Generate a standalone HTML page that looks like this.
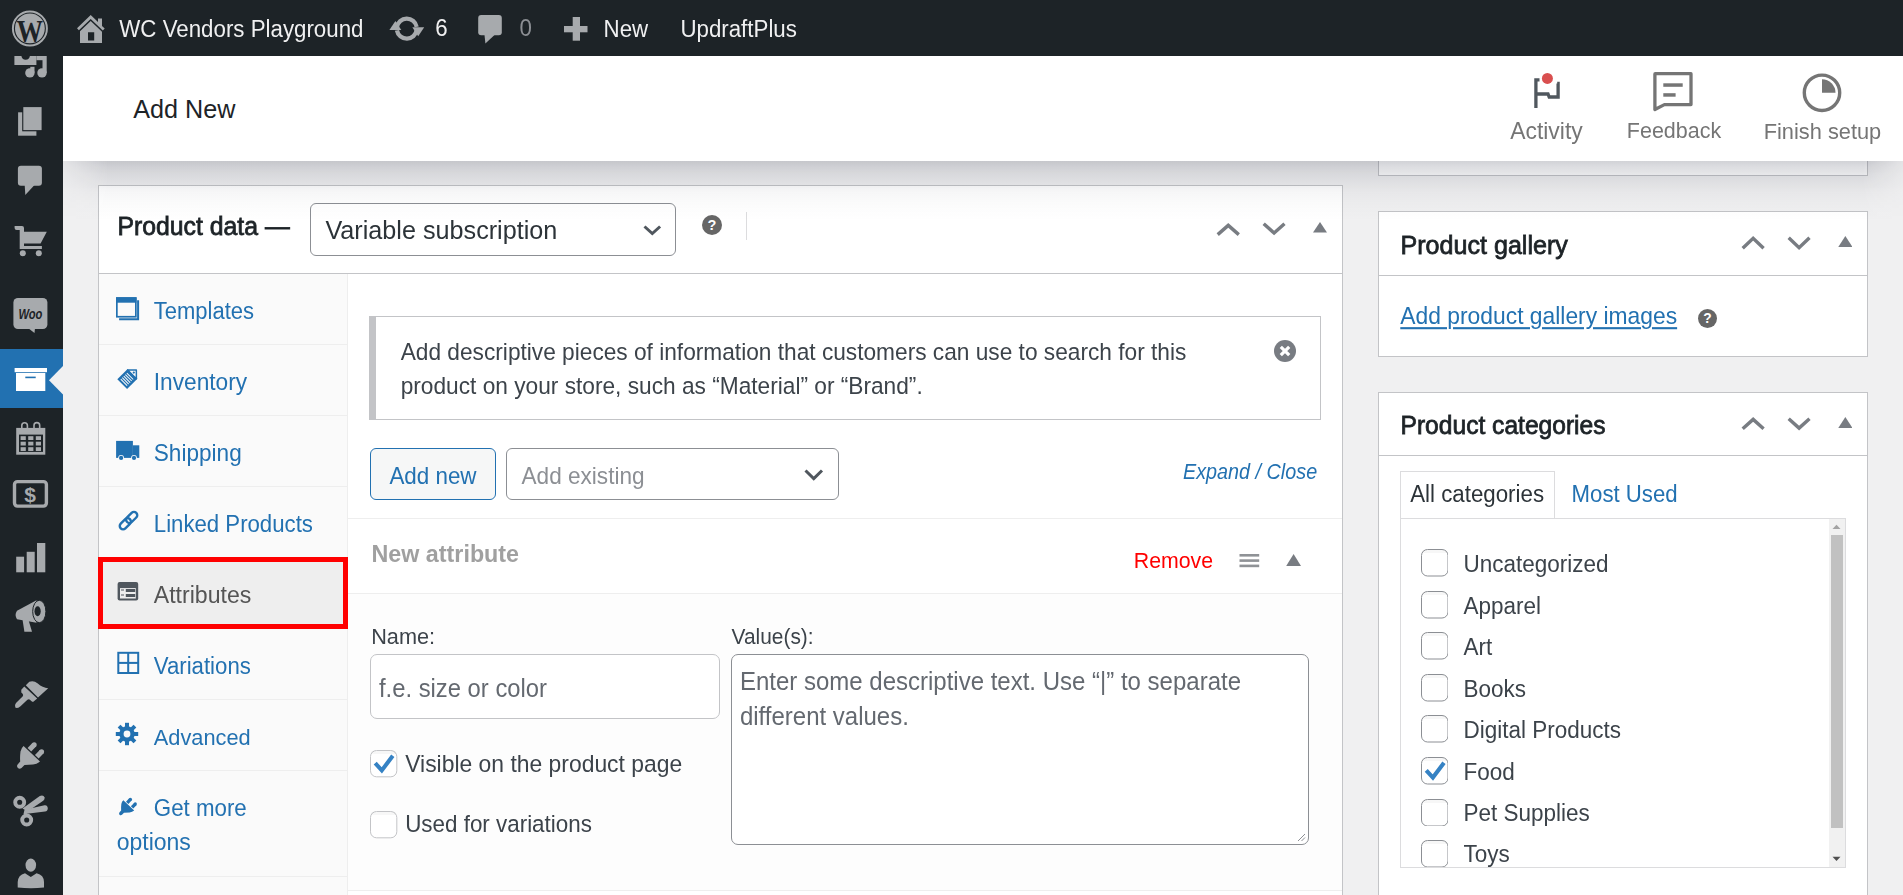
<!DOCTYPE html>
<html><head><meta charset="utf-8"><title>Add New</title>
<style>
html,body{margin:0;padding:0;}
body{width:1903px;height:895px;overflow:hidden;position:relative;background:#f0f0f1;font-family:"Liberation Sans",sans-serif;}
.t{position:absolute;white-space:nowrap;}
.b{position:absolute;box-sizing:border-box;}
</style></head><body>
<div class="b" style="left:1378px;top:100px;width:490px;height:76px;background:#fff;border:1px solid #c3c4c7;"></div>
<div class="b" style="left:1378px;top:211px;width:490px;height:146px;background:#fff;border:1px solid #c3c4c7;"></div>
<div class="b" style="left:1379px;top:275px;width:488px;height:1px;background:#c3c4c7;"></div>
<div class="b" style="left:1378px;top:392px;width:490px;height:508px;background:#fff;border:1px solid #c3c4c7;"></div>
<div class="b" style="left:1379px;top:455px;width:488px;height:1px;background:#c3c4c7;"></div>
<div class="b" style="left:98px;top:185px;width:1245px;height:715px;background:#fff;border:1px solid #c3c4c7;"></div>
<div class="b" style="left:99px;top:273px;width:1243px;height:1px;background:#c3c4c7;"></div>
<div class="b" style="left:99px;top:274px;width:249px;height:626px;background:#fafafa;border-right:1px solid #eee;"></div>
<div class="b" style="left:99px;top:344px;width:248px;height:1px;background:#eee;"></div>
<div class="b" style="left:99px;top:415px;width:248px;height:1px;background:#eee;"></div>
<div class="b" style="left:99px;top:486px;width:248px;height:1px;background:#eee;"></div>
<div class="b" style="left:99px;top:557px;width:248px;height:1px;background:#eee;"></div>
<div class="b" style="left:99px;top:628px;width:248px;height:1px;background:#eee;"></div>
<div class="b" style="left:99px;top:699px;width:248px;height:1px;background:#eee;"></div>
<div class="b" style="left:99px;top:770px;width:248px;height:1px;background:#eee;"></div>
<div class="b" style="left:99px;top:876px;width:248px;height:1px;background:#eee;"></div>
<div class="b" style="left:99px;top:558px;width:248px;height:70px;background:#eee;"></div>
<div class="b" style="left:98px;top:557px;width:250px;height:72px;border:5px solid #f00;"></div>
<div class="b" style="left:348px;top:518px;width:994px;height:1px;background:#eee;"></div>
<div class="b" style="left:348px;top:593px;width:994px;height:1px;background:#eee;"></div>
<div class="b" style="left:348px;top:594px;width:994px;height:296px;background:#fdfdfd;"></div>
<div class="b" style="left:348px;top:890px;width:994px;height:1px;background:#eee;"></div>
<div class="b" style="left:63px;top:56px;width:1840px;height:105px;background:#fff;"></div>
<div class="b" style="left:0px;top:0px;width:1903px;height:56px;background:#1d2327;"></div>
<div class="b" style="left:0px;top:56px;width:63px;height:839px;background:#1d2327;"></div>
<div class="b" style="left:0px;top:349px;width:63px;height:59px;background:#2271b1;"></div>
<svg class="b" style="left:10px;top:9px;" width="40" height="40" viewBox="0 0 40 40"><circle cx="19.9" cy="19.4" r="17" fill="none" stroke="#a7aaad" stroke-width="2"/>
<circle cx="19.9" cy="19.4" r="14.9" fill="#a7aaad"/>
<text x="6.6" y="33" textLength="26.5" lengthAdjust="spacingAndGlyphs" font-family="Liberation Serif" font-weight="bold" font-size="31" fill="#1d2327">W</text></svg>
<svg class="b" style="left:77px;top:15px;" width="28" height="29" viewBox="0 0 28 29"><path d="M0,13.3 L13.7,0 L21,7 V3.6 H25 V11 L27.7,13.6 L25.8,15.5 L13.7,3.9 L1.9,15.3 Z" fill="#a7aaad"/>
<path d="M3,16.3 L13.7,6 L25,16.8 V28 H3 Z M11,17.2 V25.5 H17.2 V17.2 Z" fill="#a7aaad" fill-rule="evenodd"/></svg>
<div class="t" style="left:119.3px;top:18.6px;font-size:22.30px;line-height:22.30px;color:#f0f0f1;transform:scaleY(1.05);transform-origin:0 18.88px;">WC Vendors Playground</div>
<svg class="b" style="left:389px;top:15px;" width="36" height="28" viewBox="0 0 36 28"><path d="M7.90,12.21 A10,10 0 0 1 27.65,11.86" fill="none" stroke="#a7aaad" stroke-width="4.3"/>
<path d="M27.70,14.99 A10,10 0 0 1 7.95,15.34" fill="none" stroke="#a7aaad" stroke-width="4.3"/>
<path d="M23.3,12.2 L35.2,12.2 L29.2,21.2 Z" fill="#a7aaad"/>
<path d="M12.3,15 L0.4,15 L6.4,6 Z" fill="#a7aaad"/></svg>
<div class="t" style="left:435.3px;top:18.1px;font-size:22.30px;line-height:22.30px;color:#f0f0f1;transform:scaleY(1.05);transform-origin:0 18.88px;">6</div>
<svg class="b" style="left:478px;top:15px;" width="25" height="29" viewBox="0 0 25 29"><rect x="0.2" y="0" width="23.6" height="20.3" rx="3" fill="#a7aaad"/>
<path d="M6.5,20 H16.5 L7.4,28.5 Z" fill="#a7aaad"/></svg>
<div class="t" style="left:519.4px;top:18.1px;font-size:22.30px;line-height:22.30px;color:#8c8f94;transform:scaleY(1.05);transform-origin:0 18.88px;">0</div>
<svg class="b" style="left:564px;top:17px;" width="24" height="24" viewBox="0 0 24 24"><rect x="8.7" y="0" width="7.3" height="23.7" fill="#a7aaad"/><rect x="0" y="9" width="23.5" height="6.3" fill="#a7aaad"/></svg>
<div class="t" style="left:603.6px;top:18.6px;font-size:22.30px;line-height:22.30px;color:#f0f0f1;transform:scaleY(1.05);transform-origin:0 18.88px;">New</div>
<div class="t" style="left:680.4px;top:18.6px;font-size:22.30px;line-height:22.30px;color:#f0f0f1;transform:scaleY(1.05);transform-origin:0 18.88px;">UpdraftPlus</div>
<svg class="b" style="left:0px;top:56px;" width="63" height="25" viewBox="0 0 63 25"><path d="M14.4,0 H21.4 A4.3,4.3 0 0 0 29.9,0 H36.4 V8.9 H14.4 Z" fill="#a7aaad"/>
<rect x="42.5" y="0" width="4.2" height="17" fill="#a7aaad"/>
<rect x="36.4" y="0" width="8" height="4.2" fill="#a7aaad"/>
<rect x="30.3" y="10.8" width="4.2" height="6" fill="#a7aaad"/>
<circle cx="29.9" cy="16.9" r="4.7" fill="#a7aaad"/><circle cx="42" cy="16.9" r="4.7" fill="#a7aaad"/></svg>
<svg class="b" style="left:0px;top:100px;" width="63" height="40" viewBox="0 0 63 40"><rect x="18.1" y="12.3" width="18.3" height="23.4" fill="#a7aaad"/>
<rect x="22.2" y="6" width="20.4" height="25.3" fill="#1d2327"/>
<rect x="23.3" y="7.1" width="18.3" height="23" fill="#a7aaad"/></svg>
<svg class="b" style="left:0px;top:160px;" width="63" height="40" viewBox="0 0 63 40"><rect x="17.9" y="5.8" width="24" height="19.9" rx="3" fill="#a7aaad"/>
<path d="M24.7,25 H34.5 L25.3,34.9 Z" fill="#a7aaad"/></svg>
<svg class="b" style="left:0px;top:220px;" width="63" height="40" viewBox="0 0 63 40"><path d="M14.6,6 H22 Q24,6 24,8 V11.8 H46.8 L40.6,23.5 H24 V26 H41.9 V29 H19.7 V10 H16.6 Q14.6,10 14.6,8 Z" fill="#a7aaad"/>
<circle cx="22.8" cy="33.3" r="3" fill="#a7aaad"/><circle cx="38.8" cy="33.3" r="3" fill="#a7aaad"/></svg>
<svg class="b" style="left:0px;top:290px;" width="63" height="50" viewBox="0 0 63 50"><rect x="13.4" y="8" width="34" height="31" rx="4.5" fill="#a7aaad"/>
<path d="M28,38 H35 L34.5,43 Z" fill="#a7aaad"/>
<text x="30.4" y="29" text-anchor="middle" font-family="Liberation Sans" font-style="italic" font-weight="bold" font-size="14.5" textLength="24" lengthAdjust="spacingAndGlyphs" fill="#1d2327">Woo</text></svg>
<svg class="b" style="left:0px;top:360px;" width="63" height="40" viewBox="0 0 63 40"><rect x="14.6" y="8" width="32.4" height="4.2" fill="#fff"/>
<rect x="16" y="13" width="29.3" height="18" fill="#fff"/>
<rect x="25.3" y="16.6" width="10.4" height="1.6" fill="#2271b1"/>
<path d="M63,6 L49,20.3 L63,34.6 Z" fill="#f0f0f1"/></svg>
<svg class="b" style="left:0px;top:420px;" width="63" height="40" viewBox="0 0 63 40"><rect x="16.2" y="7.9" width="29.1" height="26.8" fill="#a7aaad"/><rect x="19" y="14.6" width="24" height="17.3" fill="#1d2327"/><path d="M21.8,9 V5.5 A2.8,2.8 0 0 1 27.4,5.5 V9" fill="none" stroke="#a7aaad" stroke-width="1.6"/><path d="M34,9 V5.5 A2.8,2.8 0 0 1 39.7,5.5 V9" fill="none" stroke="#a7aaad" stroke-width="1.6"/><rect x="20.6" y="16.2" width="5.2" height="3.8" fill="#a7aaad"/><rect x="20.6" y="21.7" width="5.2" height="3.8" fill="#a7aaad"/><rect x="20.6" y="27.2" width="5.2" height="3.8" fill="#a7aaad"/><rect x="28.2" y="16.2" width="5.2" height="3.8" fill="#a7aaad"/><rect x="28.2" y="21.7" width="5.2" height="3.8" fill="#a7aaad"/><rect x="28.2" y="27.2" width="5.2" height="3.8" fill="#a7aaad"/><rect x="35.8" y="16.2" width="5.2" height="3.8" fill="#a7aaad"/><rect x="35.8" y="21.7" width="5.2" height="3.8" fill="#a7aaad"/><rect x="35.8" y="27.2" width="5.2" height="3.8" fill="#a7aaad"/></svg>
<svg class="b" style="left:0px;top:475px;" width="63" height="40" viewBox="0 0 63 40"><rect x="14.5" y="6.6" width="31.9" height="24.5" rx="3" fill="none" stroke="#a7aaad" stroke-width="3.4"/>
<text x="30.2" y="27" text-anchor="middle" font-family="Liberation Sans" font-weight="bold" font-size="21" fill="#a7aaad">$</text></svg>
<svg class="b" style="left:0px;top:540px;" width="63" height="40" viewBox="0 0 63 40"><rect x="16.2" y="16.7" width="7.9" height="15.6" fill="#a7aaad"/>
<rect x="26.7" y="11.8" width="8" height="20.5" fill="#a7aaad"/>
<rect x="37" y="3" width="8.3" height="29.3" fill="#a7aaad"/></svg>
<svg class="b" style="left:0px;top:595px;" width="63" height="40" viewBox="0 0 63 40"><path d="M17,15.8 L36.5,5.2 V27.7 L17,24.2 Q14.2,20 17,15.8 Z" fill="#a7aaad"/>
<path d="M22.6,25 H28.5 L32,36.8 H24.4 Z" fill="#a7aaad"/>
<ellipse cx="39.3" cy="16.5" rx="6.6" ry="11.2" fill="#a7aaad" stroke="#1d2327" stroke-width="1"/>
<ellipse cx="37.6" cy="16.3" rx="3.1" ry="5" fill="#1d2327"/></svg>
<svg class="b" style="left:0px;top:675px;" width="63" height="40" viewBox="0 0 63 40"><path d="M21.3,14.8 L24.3,11.6 L37.2,23.4 L33,27 Q31.5,26.6 30.2,25 Q29,23.6 27.4,24.8 L20.5,31.2 Q17,34 15.3,32.6 Q14,30.6 16,28 L22.8,21.3 Q23.6,20 22.6,18.8 L21.3,17.4 Z" fill="#a7aaad"/>
<path d="M25.8,10.2 L29.3,6.8 Q33.5,5 37.8,8.4 Q42.5,12.6 48.2,13.3 L38,22.5 Z" fill="#a7aaad"/></svg>
<svg class="b" style="left:0px;top:735px;" width="63" height="40" viewBox="0 0 63 40"><path d="M23.6,11 L40,26.6 Q37,29 33,29.6 L24.5,30 L21.5,33 Q19.5,34.5 17.7,32.8 Q16.3,31 17.8,29.2 L20.2,26.6 Q19.8,22 20.5,16.5 Q21.2,13 23.6,11 Z" fill="#a7aaad"/>
<path d="M29.4,14.8 L34.2,9.7 M36.8,21.8 L41.6,16.7" stroke="#a7aaad" stroke-width="5" stroke-linecap="butt"/>
<circle cx="34.2" cy="9.7" r="2.5" fill="#a7aaad"/><circle cx="41.6" cy="16.7" r="2.5" fill="#a7aaad"/></svg>
<svg class="b" style="left:0px;top:790px;" width="63" height="40" viewBox="0 0 63 40"><circle cx="19.7" cy="12.3" r="4.5" fill="none" stroke="#a7aaad" stroke-width="3.9"/>
<circle cx="26.7" cy="30" r="4.5" fill="none" stroke="#a7aaad" stroke-width="3.9"/>
<path d="M22.5,18.5 L39.8,6 Q43.5,4.4 44.6,7.6 Q45,9.4 43.2,10.8 L27.5,21.6 Z" fill="#a7aaad"/>
<path d="M24.5,19.8 L44.5,15.2 Q47.5,14.8 47.8,18.2 Q47.8,21.2 45,21.5 L27,23.8 Q25,25.5 23.5,24 Z" fill="#a7aaad"/></svg>
<svg class="b" style="left:0px;top:855px;" width="63" height="40" viewBox="0 0 63 40"><ellipse cx="30.8" cy="10.1" rx="5.3" ry="6.6" fill="#a7aaad"/>
<path d="M17.7,32.4 V27 Q18,20 25,18.2 L30.8,22 L36.6,18.2 Q44,20 44,27 V32.4 Q31,34 17.7,32.4 Z" fill="#a7aaad"/></svg>
<div class="t" style="left:133.2px;top:97.3px;font-size:25.20px;line-height:25.20px;color:#1d2327;">Add New</div>
<svg class="b" style="left:1525px;top:65px;" width="45" height="50" viewBox="0 0 45 50"><path d="M10.9,43 V14.8 H14.5 M32.2,18.5 H33.1 V32 H24.2 L23,29 H12.5" fill="none" stroke="#50575e" stroke-width="3.3" stroke-linejoin="miter"/>
<circle cx="22.4" cy="13.4" r="7.2" fill="#fff"/>
<circle cx="22.4" cy="13.4" r="5.5" fill="#d94f4f"/></svg>
<div class="t" style="left:1510.2px;top:120.0px;font-size:22.90px;line-height:22.90px;color:#757575;transform:scaleY(1.05);transform-origin:0 19.38px;">Activity</div>
<svg class="b" style="left:1645px;top:65px;" width="55" height="55" viewBox="0 0 55 55"><path d="M9.9,44.5 V9 Q9.9,8.7 10.3,8.7 H46 Q46,8.7 46,9 V39.6 H19.4 Z" fill="none" stroke="#757575" stroke-width="3.3" stroke-linejoin="round"/>
<rect x="18.3" y="18.3" width="19.4" height="3.5" fill="#757575"/>
<rect x="18.3" y="28.2" width="12.3" height="3.5" fill="#757575"/></svg>
<div class="t" style="left:1626.8px;top:121.2px;font-size:21.50px;line-height:21.50px;color:#757575;transform:scaleY(1.05);transform-origin:0 18.20px;">Feedback</div>
<svg class="b" style="left:1795px;top:65px;" width="55" height="55" viewBox="0 0 55 55"><circle cx="27" cy="27.8" r="17.7" fill="none" stroke="#757575" stroke-width="3.4"/>
<path d="M27,27.8 V14.3 A13.5,13.5 0 0 1 40.5,27.8 Z" fill="#757575"/></svg>
<div class="t" style="left:1763.7px;top:120.9px;font-size:21.80px;line-height:21.80px;color:#757575;transform:scaleY(1.05);transform-origin:0 18.45px;">Finish setup</div>
<div class="t" style="left:117.4px;top:214.5px;font-size:24.80px;line-height:24.80px;color:#1d2327;transform:scaleY(1.03);transform-origin:0 20.99px;-webkit-text-stroke:0.75px currentColor;">Product data —</div>
<div class="b" style="left:310px;top:203px;width:366px;height:53px;background:#fff;border:1px solid #8c8f94;border-radius:6px;"></div>
<div class="t" style="left:325.4px;top:218.3px;font-size:25.20px;line-height:25.20px;color:#2c3338;transform:scaleY(1.05);transform-origin:0 21.33px;">Variable subscription</div>
<svg class="b" style="left:639.8px;top:221.6px;" width="24.6" height="16.6" viewBox="0 0 24.6 16.6"><path d="M4.50,4.50 L12.30,11.50 L20.10,4.50" fill="none" stroke="#50575e" stroke-width="3" stroke-linecap="butt"/></svg>
<svg class="b" style="left:701.7px;top:215.4px;" width="20" height="20" viewBox="0 0 20 20"><circle cx="10" cy="10" r="10" fill="#666"/><text x="10" y="15.0" text-anchor="middle" font-family="Liberation Sans" font-weight="bold" font-size="14.5" fill="#fff">?</text></svg>
<div class="b" style="left:746px;top:212px;width:1px;height:28px;background:#dcdcde;"></div>
<svg class="b" style="left:1213.3px;top:219.7px;" width="30.5" height="19.3" viewBox="0 0 30.5 19.3"><path d="M4.70,14.60 L15.25,5.38 L25.80,14.60" fill="none" stroke="#787c82" stroke-width="3.4" stroke-linecap="butt"/></svg>
<svg class="b" style="left:1258.9px;top:219.4px;" width="30.2" height="19.4" viewBox="0 0 30.2 19.4"><path d="M4.70,4.70 L15.10,14.02 L25.50,4.70" fill="none" stroke="#787c82" stroke-width="3.4" stroke-linecap="butt"/></svg>
<svg class="b" style="left:1313px;top:222.4px;" width="14" height="10.4" viewBox="0 0 14 10.4"><path d="M0,10.4 L7.0,0 L14,10.4 Z" fill="#787c82"/></svg>
<div class="t" style="left:153.8px;top:300.8px;font-size:22.00px;line-height:22.00px;color:#2271b1;transform:scaleY(1.05);transform-origin:0 18.62px;">Templates</div>
<div class="t" style="left:153.8px;top:371.4px;font-size:22.70px;line-height:22.70px;color:#2271b1;transform:scaleY(1.05);transform-origin:0 19.22px;">Inventory</div>
<div class="t" style="left:153.8px;top:442.5px;font-size:22.60px;line-height:22.60px;color:#2271b1;transform:scaleY(1.05);transform-origin:0 19.13px;">Shipping</div>
<div class="t" style="left:153.8px;top:513.8px;font-size:22.20px;line-height:22.20px;color:#2271b1;transform:scaleY(1.05);transform-origin:0 18.79px;">Linked Products</div>
<div class="t" style="left:153.8px;top:584.2px;font-size:23.10px;line-height:23.10px;color:#555;transform:scaleY(1.05);transform-origin:0 19.55px;">Attributes</div>
<div class="t" style="left:153.8px;top:656.0px;font-size:22.20px;line-height:22.20px;color:#2271b1;transform:scaleY(1.05);transform-origin:0 18.79px;">Variations</div>
<div class="t" style="left:153.8px;top:727.3px;font-size:21.80px;line-height:21.80px;color:#2271b1;transform:scaleY(1.05);transform-origin:0 18.45px;">Advanced</div>
<div class="t" style="left:153.8px;top:797.7px;font-size:22.30px;line-height:22.30px;color:#2271b1;transform:scaleY(1.05);transform-origin:0 18.88px;">Get more</div>
<div class="t" style="left:116.7px;top:831.4px;font-size:23.00px;line-height:23.00px;color:#2271b1;transform:scaleY(1.05);transform-origin:0 19.47px;">options</div>
<svg class="b" style="left:114px;top:295px;" width="28" height="28" viewBox="0 0 28 28"><rect x="2.85" y="3.05" width="19" height="18.7" fill="none" stroke="#2271b1" stroke-width="1.7"/>
<rect x="2.1" y="2.3" width="20.3" height="5.4" fill="#2271b1"/>
<path d="M5.1,24.3 H24.1 V5.3" fill="none" stroke="#2271b1" stroke-width="2"/></svg>
<svg class="b" style="left:112px;top:360px;" width="32" height="32" viewBox="0 0 32 32"><g transform="rotate(-45 16.45 17.9)"><rect x="7.6" y="11" width="14.6" height="13.8" fill="#2271b1"/><rect x="9.60" y="13.4" width="1.0" height="9.0" fill="#fafafa"/><rect x="11.75" y="13.4" width="1.0" height="9.0" fill="#fafafa"/><rect x="13.90" y="13.4" width="1.0" height="9.0" fill="#fafafa"/><rect x="16.05" y="13.4" width="1.0" height="9.0" fill="#fafafa"/><rect x="18.20" y="13.4" width="1.0" height="9.0" fill="#fafafa"/><path d="M21.5,11.7 L27.6,17.9 L21.5,24.1 Z" fill="#fafafa" stroke="#2271b1" stroke-width="1.5" stroke-linejoin="round"/><circle cx="24" cy="17.9" r="1.1" fill="#2271b1"/></g></svg>
<svg class="b" style="left:114px;top:438px;" width="28" height="24" viewBox="0 0 28 24"><rect x="2.1" y="2.9" width="16.8" height="17" fill="#2271b1"/>
<rect x="18.9" y="7.3" width="6.4" height="12.6" fill="#2271b1"/>
<circle cx="7.1" cy="19.9" r="2.9" fill="#fafafa"/><circle cx="7.1" cy="19.9" r="2.1" fill="#2271b1"/>
<circle cx="20" cy="19.9" r="2.9" fill="#fafafa"/><circle cx="20" cy="19.9" r="2.1" fill="#2271b1"/></svg>
<svg class="b" style="left:114px;top:506px;" width="28" height="28" viewBox="0 0 28 28"><g transform="rotate(-45 14.5 14.6)">
<rect x="3.5" y="11.3" width="13" height="6.6" rx="3.3" fill="none" stroke="#2271b1" stroke-width="2.4"/>
<rect x="12.5" y="11.3" width="13" height="6.6" rx="3.3" fill="none" stroke="#2271b1" stroke-width="2.4"/>
</g></svg>
<svg class="b" style="left:114px;top:578px;" width="28" height="28" viewBox="0 0 28 28"><rect x="3.6" y="4" width="20.6" height="18.6" rx="2" fill="#50575e"/>
<rect x="6" y="10.1" width="15.8" height="10.4" fill="#eee"/>
<rect x="11.8" y="11" width="9.4" height="3" fill="#50575e"/><rect x="11.8" y="16" width="9.4" height="3" fill="#50575e"/>
<rect x="7" y="11.5" width="3" height="1" fill="#50575e"/><rect x="7" y="16.5" width="3" height="1" fill="#50575e"/></svg>
<svg class="b" style="left:114px;top:648px;" width="28" height="28" viewBox="0 0 28 28"><rect x="4.3" y="4.8" width="19.9" height="20.2" fill="none" stroke="#2271b1" stroke-width="2"/>
<rect x="13.2" y="4.8" width="2" height="20.2" fill="#2271b1"/><rect x="4.3" y="13.9" width="19.9" height="2" fill="#2271b1"/></svg>
<svg class="b" style="left:113px;top:720px;" width="28" height="28" viewBox="0 0 28 28"><rect x="12" y="2.8" width="4" height="5" fill="#2271b1" transform="rotate(0 14 14)"/><rect x="12" y="2.8" width="4" height="5" fill="#2271b1" transform="rotate(45 14 14)"/><rect x="12" y="2.8" width="4" height="5" fill="#2271b1" transform="rotate(90 14 14)"/><rect x="12" y="2.8" width="4" height="5" fill="#2271b1" transform="rotate(135 14 14)"/><rect x="12" y="2.8" width="4" height="5" fill="#2271b1" transform="rotate(180 14 14)"/><rect x="12" y="2.8" width="4" height="5" fill="#2271b1" transform="rotate(225 14 14)"/><rect x="12" y="2.8" width="4" height="5" fill="#2271b1" transform="rotate(270 14 14)"/><rect x="12" y="2.8" width="4" height="5" fill="#2271b1" transform="rotate(315 14 14)"/><circle cx="14" cy="14" r="7.7" fill="#2271b1"/><circle cx="14" cy="14" r="3.4" fill="#fafafa"/></svg>
<svg class="b" style="left:0;top:0" width="160" height="840" viewBox="0 0 160 840"><g transform="translate(107.8 793) scale(0.66)"><path d="M23.6,11 L40,26.6 Q37,29 33,29.6 L24.5,30 L21.5,33 Q19.5,34.5 17.7,32.8 Q16.3,31 17.8,29.2 L20.2,26.6 Q19.8,22 20.5,16.5 Q21.2,13 23.6,11 Z" fill="#2271b1"/>
<path d="M29.4,14.8 L34.2,9.7 M36.8,21.8 L41.6,16.7" stroke="#2271b1" stroke-width="5" stroke-linecap="butt"/>
<circle cx="34.2" cy="9.7" r="2.5" fill="#2271b1"/><circle cx="41.6" cy="16.7" r="2.5" fill="#2271b1"/></g></svg>
<div class="b" style="left:369px;top:316px;width:952px;height:104px;background:#fff;border:1px solid #c3c4c7;border-left:7px solid #c3c4c7;"></div>
<div class="t" style="left:400.7px;top:341.3px;font-size:22.70px;line-height:22.70px;color:#3c434a;transform:scaleY(1.05);transform-origin:0 19.22px;">Add descriptive pieces of information that customers can use to search for this</div>
<div class="t" style="left:400.7px;top:374.7px;font-size:22.70px;line-height:22.70px;color:#3c434a;transform:scaleY(1.05);transform-origin:0 19.22px;">product on your store, such as “Material” or “Brand”.</div>
<svg class="b" style="left:1273px;top:339px;" width="24" height="24" viewBox="0 0 24 24"><circle cx="12" cy="12" r="11" fill="#787c82"/>
<path d="M7.8,7.8 L16.2,16.2 M16.2,7.8 L7.8,16.2" stroke="#fff" stroke-width="3.2" stroke-linecap="butt"/></svg>
<div class="b" style="left:370px;top:448px;width:126px;height:52px;background:#f6f7f7;border:1px solid #2271b1;border-radius:6px;"></div>
<div class="t" style="left:389.4px;top:465.6px;font-size:22.40px;line-height:22.40px;color:#2271b1;transform:scaleY(1.05);transform-origin:0 18.96px;">Add new</div>
<div class="b" style="left:506px;top:448px;width:333px;height:52px;background:#fff;border:1px solid #8c8f94;border-radius:6px;"></div>
<div class="t" style="left:521.5px;top:465.5px;font-size:22.60px;line-height:22.60px;color:#8c8f94;transform:scaleY(1.05);transform-origin:0 19.13px;">Add existing</div>
<svg class="b" style="left:801px;top:465.8px;" width="25.5" height="17.7" viewBox="0 0 25.5 17.7"><path d="M4.50,4.50 L12.75,12.60 L21.00,4.50" fill="none" stroke="#50575e" stroke-width="3" stroke-linecap="butt"/></svg>
<div class="t" style="left:1183.0px;top:463.1px;font-size:19.80px;line-height:19.80px;color:#2271b1;transform:scaleY(1.13);transform-origin:0 16.76px;font-style:italic;">Expand / Close</div>
<div class="t" style="left:371.5px;top:542.7px;font-size:23.30px;line-height:23.30px;color:#a0a0a0;transform:scaleY(1.03);transform-origin:0 19.72px;font-weight:700;">New attribute</div>
<div class="t" style="left:1133.8px;top:551.0px;font-size:21.30px;line-height:21.30px;color:#f00;transform:scaleY(1.05);transform-origin:0 18.03px;">Remove</div>
<svg class="b" style="left:1239px;top:553px;" width="21" height="16" viewBox="0 0 21 16"><rect x="0.5" y="1" width="19.7" height="2.6" fill="#8f9296"/><rect x="0.5" y="6.3" width="19.7" height="2.6" fill="#8f9296"/><rect x="0.5" y="11.6" width="19.7" height="2.6" fill="#8f9296"/></svg>
<svg class="b" style="left:1285.8px;top:553.7px;" width="15.2" height="12.3" viewBox="0 0 15.2 12.3"><path d="M0,12.3 L7.6,0 L15.2,12.3 Z" fill="#787c82"/></svg>
<div class="t" style="left:371.2px;top:626.2px;font-size:21.70px;line-height:21.70px;color:#3c434a;transform:scaleY(1.05);transform-origin:0 18.37px;">Name:</div>
<div class="t" style="left:731.6px;top:626.7px;font-size:20.90px;line-height:20.90px;color:#3c434a;transform:scaleY(1.05);transform-origin:0 17.69px;">Value(s):</div>
<div class="b" style="left:370px;top:654px;width:350px;height:65px;background:#fff;border:1px solid #c3c4c7;border-radius:7px;"></div>
<div class="t" style="left:379.0px;top:676.8px;font-size:23.80px;line-height:23.80px;color:#646970;transform:scaleY(1.05);transform-origin:0 20.15px;">f.e. size or color</div>
<svg class="b" style="left:370.3px;top:750.3px;" width="27.3" height="27.3" viewBox="0 0 27.3 27.3"><rect x="0.5" y="0.5" width="26.3" height="26.3" rx="6" fill="#fff" stroke="#c3c4c7" stroke-width="1"/><rect x="1" y="1" width="25.3" height="3" rx="1.5" fill="rgba(0,0,0,0.03)"/><path d="M5.20,13.20 L11.80,20.40 L22.80,5.80" fill="none" stroke="#3582c4" stroke-width="4.10"/></svg>
<div class="t" style="left:405.2px;top:753.0px;font-size:22.90px;line-height:22.90px;color:#3c434a;transform:scaleY(1.05);transform-origin:0 19.38px;">Visible on the product page</div>
<svg class="b" style="left:370.3px;top:811.3px;" width="27.3" height="27.3" viewBox="0 0 27.3 27.3"><rect x="0.5" y="0.5" width="26.3" height="26.3" rx="6" fill="#fff" stroke="#c3c4c7" stroke-width="1"/><rect x="1" y="1" width="25.3" height="3" rx="1.5" fill="rgba(0,0,0,0.03)"/></svg>
<div class="t" style="left:405.2px;top:814.4px;font-size:22.40px;line-height:22.40px;color:#3c434a;transform:scaleY(1.05);transform-origin:0 18.96px;">Used for variations</div>
<div class="b" style="left:731px;top:654px;width:578px;height:191px;background:#fff;border:1px solid #8c8f94;border-radius:7px;"></div>
<div class="t" style="left:739.9px;top:669.8px;font-size:24.00px;line-height:24.00px;color:#646970;transform:scaleY(1.05);transform-origin:0 20.32px;">Enter some descriptive text. Use “|” to separate</div>
<div class="t" style="left:739.9px;top:704.5px;font-size:24.00px;line-height:24.00px;color:#646970;transform:scaleY(1.05);transform-origin:0 20.32px;">different values.</div>
<svg class="b" style="left:1296px;top:832px;" width="10" height="10" viewBox="0 0 10 10"><path d="M9,2 L2,9 M9,5.5 L5.5,9" stroke="#8c8f94" stroke-width="1"/></svg>
<div class="t" style="left:1400.5px;top:233.0px;font-size:25.10px;line-height:25.10px;color:#1d2327;transform:scaleY(1.03);transform-origin:0 21.25px;-webkit-text-stroke:0.75px currentColor;">Product gallery</div>
<svg class="b" style="left:1738px;top:233px;" width="30.3" height="20" viewBox="0 0 30.3 20"><path d="M4.70,15.30 L15.15,5.38 L25.60,15.30" fill="none" stroke="#787c82" stroke-width="3.4" stroke-linecap="butt"/></svg>
<svg class="b" style="left:1783.8px;top:233px;" width="30.2" height="20" viewBox="0 0 30.2 20"><path d="M4.70,4.70 L15.10,14.62 L25.50,4.70" fill="none" stroke="#787c82" stroke-width="3.4" stroke-linecap="butt"/></svg>
<svg class="b" style="left:1837.7px;top:236px;" width="14.7" height="11.4" viewBox="0 0 14.7 11.4"><path d="M0,11.4 L7.35,0 L14.7,11.4 Z" fill="#787c82"/></svg>
<div class="t" style="left:1400.3px;top:305.1px;font-size:22.85px;line-height:22.85px;color:#2271b1;transform:scaleY(1.05);transform-origin:0 19.34px;text-decoration:underline;text-decoration-thickness:1.7px;text-underline-offset:3px;">Add product gallery images</div>
<svg class="b" style="left:1697.5px;top:308.7px;" width="19.0" height="19.0" viewBox="0 0 19.0 19.0"><circle cx="9.5" cy="9.5" r="9.5" fill="#666"/><text x="9.5" y="14.25" text-anchor="middle" font-family="Liberation Sans" font-weight="bold" font-size="13.8" fill="#fff">?</text></svg>
<div class="t" style="left:1400.5px;top:414.2px;font-size:24.60px;line-height:24.60px;color:#1d2327;transform:scaleY(1.03);transform-origin:0 20.82px;-webkit-text-stroke:0.75px currentColor;">Product categories</div>
<svg class="b" style="left:1738px;top:413.7px;" width="30.3" height="19.5" viewBox="0 0 30.3 19.5"><path d="M4.70,14.80 L15.15,5.38 L25.60,14.80" fill="none" stroke="#787c82" stroke-width="3.4" stroke-linecap="butt"/></svg>
<svg class="b" style="left:1783.8px;top:413.7px;" width="30.2" height="19.5" viewBox="0 0 30.2 19.5"><path d="M4.70,4.70 L15.10,14.12 L25.50,4.70" fill="none" stroke="#787c82" stroke-width="3.4" stroke-linecap="butt"/></svg>
<svg class="b" style="left:1837.7px;top:417px;" width="14.7" height="11.4" viewBox="0 0 14.7 11.4"><path d="M0,11.4 L7.35,0 L14.7,11.4 Z" fill="#787c82"/></svg>
<div class="b" style="left:1400px;top:471px;width:155px;height:48px;background:#fff;border:1px solid #dcdcde;border-bottom:none;"></div>
<div class="t" style="left:1410.2px;top:484.2px;font-size:22.30px;line-height:22.30px;color:#2c3338;transform:scaleY(1.05);transform-origin:0 18.88px;">All categories</div>
<div class="t" style="left:1571.6px;top:484.3px;font-size:22.20px;line-height:22.20px;color:#2271b1;transform:scaleY(1.05);transform-origin:0 18.79px;">Most Used</div>
<div class="b" style="left:1400px;top:518px;width:446px;height:350px;background:#fff;border:1px solid #dcdcde;"></div>
<div class="b" style="left:1555px;top:518px;width:291px;height:1px;background:#dcdcde;"></div>
<div class="b" style="left:1401px;top:519px;width:154px;height:1px;background:#fff;"></div>
<div class="b" style="left:1829px;top:519px;width:16px;height:348px;background:#f1f1f1;"></div>
<div class="b" style="left:1830.5px;top:535px;width:12.5px;height:293px;background:#c1c1c1;"></div>
<svg class="b" style="left:1832px;top:524px;" width="9" height="6" viewBox="0 0 9 6"><path d="M0.5,5 L4.5,0.8 L8.5,5 Z" fill="#a3a3a3"/></svg>
<svg class="b" style="left:1832px;top:856px;" width="9" height="6" viewBox="0 0 9 6"><path d="M0.5,0.8 L4.5,5 L8.5,0.8 Z" fill="#505050"/></svg>
<svg class="b" style="left:1420.6px;top:549.4px;" width="27.5" height="27.5" viewBox="0 0 27.5 27.5"><rect x="0.5" y="0.5" width="26.5" height="26.5" rx="6" fill="#fff" stroke="#8c8f94" stroke-width="1"/><rect x="1" y="1" width="25.5" height="3" rx="1.5" fill="rgba(0,0,0,0.03)"/></svg>
<div class="t" style="left:1463.4px;top:553.8px;font-size:22.50px;line-height:22.50px;color:#3c434a;transform:scaleY(1.05);transform-origin:0 19.05px;">Uncategorized</div>
<svg class="b" style="left:1420.6px;top:591.3px;" width="27.5" height="27.5" viewBox="0 0 27.5 27.5"><rect x="0.5" y="0.5" width="26.5" height="26.5" rx="6" fill="#fff" stroke="#8c8f94" stroke-width="1"/><rect x="1" y="1" width="25.5" height="3" rx="1.5" fill="rgba(0,0,0,0.03)"/></svg>
<div class="t" style="left:1463.4px;top:595.7px;font-size:22.50px;line-height:22.50px;color:#3c434a;transform:scaleY(1.05);transform-origin:0 19.05px;">Apparel</div>
<svg class="b" style="left:1420.6px;top:632.4px;" width="27.5" height="27.5" viewBox="0 0 27.5 27.5"><rect x="0.5" y="0.5" width="26.5" height="26.5" rx="6" fill="#fff" stroke="#8c8f94" stroke-width="1"/><rect x="1" y="1" width="25.5" height="3" rx="1.5" fill="rgba(0,0,0,0.03)"/></svg>
<div class="t" style="left:1463.4px;top:636.8px;font-size:22.50px;line-height:22.50px;color:#3c434a;transform:scaleY(1.05);transform-origin:0 19.05px;">Art</div>
<svg class="b" style="left:1420.6px;top:674.3px;" width="27.5" height="27.5" viewBox="0 0 27.5 27.5"><rect x="0.5" y="0.5" width="26.5" height="26.5" rx="6" fill="#fff" stroke="#8c8f94" stroke-width="1"/><rect x="1" y="1" width="25.5" height="3" rx="1.5" fill="rgba(0,0,0,0.03)"/></svg>
<div class="t" style="left:1463.4px;top:678.7px;font-size:22.50px;line-height:22.50px;color:#3c434a;transform:scaleY(1.05);transform-origin:0 19.05px;">Books</div>
<svg class="b" style="left:1420.6px;top:715.4px;" width="27.5" height="27.5" viewBox="0 0 27.5 27.5"><rect x="0.5" y="0.5" width="26.5" height="26.5" rx="6" fill="#fff" stroke="#8c8f94" stroke-width="1"/><rect x="1" y="1" width="25.5" height="3" rx="1.5" fill="rgba(0,0,0,0.03)"/></svg>
<div class="t" style="left:1463.4px;top:719.8px;font-size:22.50px;line-height:22.50px;color:#3c434a;transform:scaleY(1.05);transform-origin:0 19.05px;">Digital Products</div>
<svg class="b" style="left:1420.6px;top:757.3px;" width="27.5" height="27.5" viewBox="0 0 27.5 27.5"><rect x="0.5" y="0.5" width="26.5" height="26.5" rx="6" fill="#fff" stroke="#8c8f94" stroke-width="1"/><rect x="1" y="1" width="25.5" height="3" rx="1.5" fill="rgba(0,0,0,0.03)"/><path d="M5.24,13.30 L11.89,20.55 L22.97,5.84" fill="none" stroke="#3582c4" stroke-width="4.13"/></svg>
<div class="t" style="left:1463.4px;top:761.7px;font-size:22.50px;line-height:22.50px;color:#3c434a;transform:scaleY(1.05);transform-origin:0 19.05px;">Food</div>
<svg class="b" style="left:1420.6px;top:798.8px;" width="27.5" height="27.5" viewBox="0 0 27.5 27.5"><rect x="0.5" y="0.5" width="26.5" height="26.5" rx="6" fill="#fff" stroke="#8c8f94" stroke-width="1"/><rect x="1" y="1" width="25.5" height="3" rx="1.5" fill="rgba(0,0,0,0.03)"/></svg>
<div class="t" style="left:1463.4px;top:803.2px;font-size:22.50px;line-height:22.50px;color:#3c434a;transform:scaleY(1.05);transform-origin:0 19.05px;">Pet Supplies</div>
<div class="b" style="left:1401px;top:820px;width:428px;height:47px;overflow:hidden;">
<svg class="b" style="left:19.59999999999991px;top:19.799999999999955px;" width="27.5" height="27.5" viewBox="0 0 27.5 27.5"><rect x="0.5" y="0.5" width="26.5" height="26.5" rx="6" fill="#fff" stroke="#8c8f94" stroke-width="1"/><rect x="1" y="1" width="25.5" height="3" rx="1.5" fill="rgba(0,0,0,0.03)"/></svg>
<div class="t" style="left:62.4px;top:24.2px;font-size:22.50px;line-height:22.50px;color:#3c434a;transform:scaleY(1.05);transform-origin:0 19.05px;">Toys</div>
</div>
<div class="b" style="left:63px;top:161px;width:1840px;height:60px;pointer-events:none;background:linear-gradient(to bottom, rgba(40,45,66,0.21) 0px, rgba(40,45,66,0.16) 6px, rgba(40,45,66,0.12) 12px, rgba(40,45,66,0.075) 24px, rgba(40,45,66,0.045) 30px, rgba(40,45,66,0.02) 42px, rgba(40,45,66,0) 60px);-webkit-mask-image:linear-gradient(to right, rgba(0,0,0,0.3) 0px, #000 45px, #000 1800px, rgba(0,0,0,0.3) 1840px);"></div>
</body></html>
